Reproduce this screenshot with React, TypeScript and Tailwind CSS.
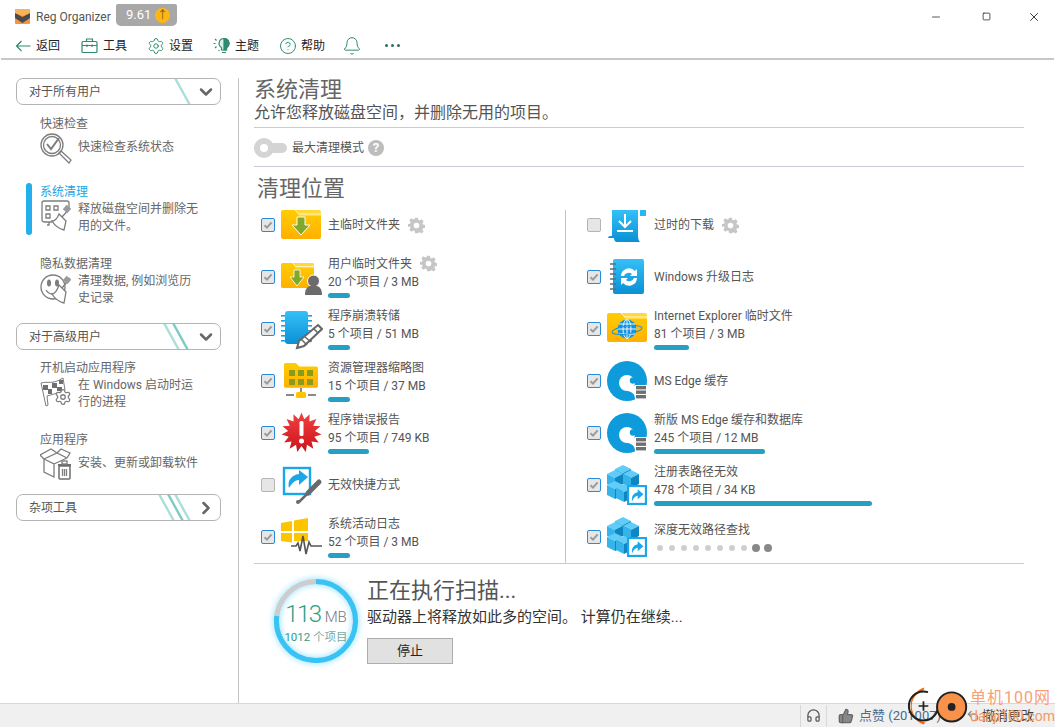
import React from 'react';
import { Bell, ChevronDown, ChevronRight, CircleHelp, Headphones, Minus, Settings, Square, ThumbsUp, Undo2, X } from 'lucide-react';

const Check = ({ on = true }: { on?: boolean }) => (
  <div className={`w-[14px] h-[14px] shrink-0 rounded-[2px] border bg-[#e6e6e6] flex items-center justify-center ${on ? 'border-[#2b8ad8]' : 'border-[#b5b5b5]'}`}>
    {on && (
      <svg width="10" height="10" viewBox="0 0 10 10">
        <path d="M1.5 5.2 4 7.6 8.6 2.4" fill="none" stroke="#9a9a9a" strokeWidth="2" />
      </svg>
    )}
  </div>
);

const Gear = () => (
  <svg width="17" height="17" viewBox="0 0 24 24" className="shrink-0">
    <path
      fill="#c6c6c6"
      fillRule="evenodd"
      d="M10 1h4l.6 3.2 2 .8 2.7-1.800 2.800 2.800-1.800 2.700.8 2 3.200.6v4l-3.200.6-.8 2 1.800 2.700-2.800 2.800-2.700-1.800-2 .8L14 23h-4l-.6-3.200-2-.8-2.700 1.800-2.800-2.800 1.800-2.700-.8-2L-.3 14v-4l3.200-.6.8-2L1.900 4.700l2.800-2.800 2.700 1.800 2-.8zM12 8a4 4 0 100 8 4 4 0 000-8z"
    />
  </svg>
);

const Folder = ({ y = 8, w = 40, h = 29 }: { y?: number; w?: number; h?: number }) => (
  <g transform={`translate(0 ${y}) scale(${w / 40} ${h / 29})`}>
    <path d="M2 0h12l4 4h20a2 2 0 012 2v21a2 2 0 01-2 2H2a2 2 0 01-2-2V2a2 2 0 012-2z" fill="url(#fold)" />
    <path d="M14 0h24a2 2 0 012 2v4H18z" fill="#ffd83a" />
    <path d="M14 0l4 4h22" fill="none" stroke="#fff" strokeWidth="0.8" />
  </g>
);

const Shortcut = ({ x, y, s }: { x: number; y: number; s: number }) => (
  <g transform={`translate(${x} ${y}) scale(${s / 28})`}>
    <rect x="1.500" y="1.500" width="25" height="25" fill="#fff" stroke="#1ba6e8" strokeWidth="3" />
    <path d="M7 23c-1-7 2-12 8-13V6l8 7-8 7v-5c-3 0-6 3-8 8z" fill="#1ba6e8" />
  </g>
);

const Cubes = () => (
  <svg width="42" height="44" viewBox="0 0 42 44">
    {[
      [8, 3],
      [16, 8],
      [0, 8],
      [0, 19],
      [9, 22],
    ].map(([x, y], i) => (
      <g key={i} transform={`translate(${x} ${y})`}>
        <path d="M0 4l8-4 8 4-8 4z" fill="#5fcdf7" />
        <path d="M0 4l8 4v10l-8-4z" fill="#34b4ea" />
        <path d="M16 4l-8 4v10l8-4z" fill="#0e86c2" />
      </g>
    ))}
    <Shortcut x={20} y={23} s={20} />
  </svg>
);

const Edge = () => (
  <svg width="42" height="44" viewBox="0 0 42 44">
    <circle cx="20" cy="23" r="20" fill="#0d9bdc" />
    <circle cx="20" cy="25" r="8" fill="#fff" />
    <circle cx="26" cy="22.500" r="3.200" fill="#0d9bdc" />
    <path d="M21 28h8v13h-1c0-5-3-7-7-8z" fill="#fff" />
    <rect x="28" y="27" width="12" height="15" fill="#fff" />
    <g fill="#6f6f6f">
      <rect x="29" y="28" width="10" height="3.400" />
      <rect x="29" y="32.500" width="10" height="3.400" />
      <rect x="29" y="37" width="10" height="3.400" />
    </g>
  </svg>
);

const burst = Array.from({ length: 30 }, (_, i) => {
  const r = i % 2 ? 13.5 : 20;
  const a = (i * Math.PI) / 15;
  return `${(20.5 + r * Math.sin(a)).toFixed(1)},${(22.5 - r * Math.cos(a)).toFixed(1)}`;
}).join(' ');

const icons: Record<string, React.ReactNode> = {
  temp: (
    <svg width="42" height="44" viewBox="0 0 42 44">
      <Folder />
      <path d="M16 15h8v8h5L20 33l-9-10h5z" fill="#7ea92a" stroke="#fff" strokeWidth="1" />
    </svg>
  ),
  user: (
    <svg width="42" height="44" viewBox="0 0 42 44">
      <Folder y={9} w={33} h={25} />
      <path d="M13 16h6v7h4l-7 9-7-9h4z" fill="#7ea92a" stroke="#fff" strokeWidth="0.8" />
      <circle cx="32.500" cy="27" r="6" fill="#6b6b6b" stroke="#fff" strokeWidth="1" />
      <path d="M24 41c0-6 2-8 5-9h7c3 1 5 3 5 9z" fill="#6b6b6b" />
    </svg>
  ),
  crash: (
    <svg width="42" height="44" viewBox="0 0 42 44">
      <g fill="#18a3e6">
        {[9, 14, 19, 24, 29, 34].map((y) => (
          <rect key={y} x="0" y={y} width="31" height="1.600" />
        ))}
      </g>
      <rect x="4" y="5" width="23" height="33" rx="3" fill="url(#chip)" />
      <path d="M37 19l4 4-18 17-7 2 2-7z" fill="#fff" stroke="#666" strokeWidth="2" />
      <path d="M20 33l6 6M24 31l6 5M32 22l5 5" stroke="#666" strokeWidth="1.500" />
    </svg>
  ),
  thumb: (
    <svg width="42" height="44" viewBox="0 0 42 44">
      <g transform="translate(3 5) scale(0.85 0.85)">
        <path d="M2 0h12l4 4h20a2 2 0 012 2v21a2 2 0 01-2 2H2a2 2 0 01-2-2V2a2 2 0 012-2z" fill="url(#fold)" />
      </g>
      <g fill="#8a9a1c">
        {[8, 17, 26].map((x) => (
          <g key={x}>
            <rect x={x} y="12" width="6" height="6" />
            <rect x={x} y="21" width="6" height="6" />
          </g>
        ))}
      </g>
      <rect x="19" y="30" width="2" height="5" fill="#8a8a8a" />
      <rect x="5" y="36" width="8" height="2" fill="#8a8a8a" />
      <rect x="27" y="36" width="8" height="2" fill="#8a8a8a" />
      <rect x="15" y="34" width="10" height="6" rx="1.500" fill="#ffc400" />
    </svg>
  ),
  report: (
    <svg width="42" height="44" viewBox="0 0 42 44">
      <polygon points={burst} fill="url(#red)" />
      <rect x="18.500" y="11" width="4" height="15" rx="1.500" fill="#fff" />
      <circle cx="20.500" cy="31" r="2.500" fill="#fff" />
    </svg>
  ),
  shortcut: (
    <svg width="42" height="44" viewBox="0 0 42 44">
      <rect x="3" y="6" width="26" height="26" fill="#fff" stroke="#1ba6e8" strokeWidth="2.400" />
      <path d="M8 26c-2-8 3-13 10-14V8l9 7-9 8v-5c-4 0-7 3-10 8z" fill="#1ba6e8" />
      <path d="M38 20l-11 11" stroke="#6a6a6a" strokeWidth="5" strokeLinecap="round" />
      <path d="M27 31l-9 9" stroke="#6a6a6a" strokeWidth="2.500" />
      <circle cx="17" cy="40" r="2" fill="#6a6a6a" />
    </svg>
  ),
  syslog: (
    <svg width="42" height="44" viewBox="0 0 42 44">
      <g fill="#ffc400">
        <path d="M0 9l11-2v10H0z" />
        <path d="M13 6.600l14-2.600v13H13z" />
        <path d="M0 19h11v9.500l-11-1.500z" />
        <path d="M13 19h14v8H13z" />
      </g>
      <path d="M10 32h5l2-3 2 8 3-15 3 18 3-12 2 4h11" fill="none" stroke="#555" strokeWidth="1.600" />
    </svg>
  ),
  download: (
    <svg width="42" height="44" viewBox="0 0 42 44">
      <path d="M5 8h26v26c0 3 1 5 2 6H10c-2 0-3-2-3-4H1c0-2 2-2 4-2z" fill="url(#chip)" />
      <rect x="33" y="8" width="6" height="6" fill="#27b8f2" />
      <path d="M18 12v12M12 19l6 6 6-6M10 29h16" stroke="#fff" strokeWidth="2" fill="none" />
    </svg>
  ),
  update: (
    <svg width="42" height="44" viewBox="0 0 42 44">
      <rect x="6" y="5" width="31" height="35" rx="2" fill="url(#chip)" />
      <g stroke="#5b6d78" strokeWidth="1.500">
        {[10, 15, 20, 25, 30, 35].map((y) => (
          <path key={y} d={`M3 ${y}h6`} />
        ))}
      </g>
      <path d="M14 22a8 8 0 0114-5l2-2v7h-7l2-2a5 5 0 00-8 2zM30 24a8 8 0 01-14 5l-2 2v-7h7l-2 2a5 5 0 008-2z" fill="#fff" />
    </svg>
  ),
  ie: (
    <svg width="42" height="44" viewBox="0 0 42 44">
      <Folder y={7} />
      <circle cx="20" cy="23" r="9.500" fill="#1694de" />
      <g stroke="#fff" strokeWidth="0.900" fill="none">
        <ellipse cx="20" cy="23" rx="4" ry="9.500" />
        <path d="M20 13.500v19M10.500 23h19M12 18h16M12 28h16" />
      </g>
      <ellipse cx="20" cy="24" rx="15" ry="4" fill="none" stroke="#1694de" strokeWidth="1" transform="rotate(-8 20 24)" />
    </svg>
  ),
  edge: <Edge />,
  cubes: <Cubes />,
};

type Row = { id: string; name: string; stat?: string; bar?: number; gear?: boolean; off?: boolean; dots?: boolean };

const leftRows: Row[] = [
  { id: 'temp', name: '主临时文件夹', gear: true },
  { id: 'user', name: '用户临时文件夹', stat: '20 个项目 / 3 MB', bar: 22, gear: true },
  { id: 'crash', name: '程序崩溃转储', stat: '5 个项目 / 51 MB', bar: 22 },
  { id: 'thumb', name: '资源管理器缩略图', stat: '15 个项目 / 37 MB', bar: 22 },
  { id: 'report', name: '程序错误报告', stat: '95 个项目 / 749 KB', bar: 41 },
  { id: 'shortcut', name: '无效快捷方式', off: true },
  { id: 'syslog', name: '系统活动日志', stat: '52 个项目 / 3 MB', bar: 22 },
];

const rightRows: Row[] = [
  { id: 'download', name: '过时的下载', gear: true, off: true },
  { id: 'update', name: 'Windows 升级日志' },
  { id: 'ie', name: 'Internet Explorer 临时文件', stat: '81 个项目 / 3 MB', bar: 35 },
  { id: 'edge', name: 'MS Edge 缓存' },
  { id: 'edge', name: '新版 MS Edge 缓存和数据库', stat: '245 个项目 / 12 MB', bar: 111 },
  { id: 'cubes', name: '注册表路径无效', stat: '478 个项目 / 34 KB', bar: 218 },
  { id: 'cubes', name: '深度无效路径查找', dots: true },
];

const CleanRow = ({ row }: { row: Row }) => (
  <div className="h-[52px] flex items-center">
    <Check on={!row.off} />
    <div className="w-[42px] h-[44px] ml-[6px] mb-[2px] shrink-0">{icons[row.id]}</div>
    <div className={`ml-[5px] text-[12px] text-[#555] ${row.dots ? 'mt-[4px]' : row.stat ? 'mb-[2px]' : ''}`}>
      <div className="h-[18px] leading-[18px] flex items-center whitespace-nowrap">
        {row.name}
        {row.gear && <span className="ml-[8px]"><Gear /></span>}
      </div>
      {row.stat && <div className="h-[18px] leading-[18px] whitespace-nowrap">{row.stat}</div>}
      {row.bar && <div className="mt-[2px] h-[5px] rounded-full bg-[#259fc3]" style={{ width: row.bar }} />}
      {row.dots && (
        <div className="h-[19px] flex items-center gap-[6px] pl-[3px]">
          {[0, 1, 2, 3, 4, 5, 6, 7].map((d) => (
            <div key={d} className="w-[6px] h-[6px] rounded-full bg-[#cfcfcf]" />
          ))}
          <div className="w-[8px] h-[8px] -ml-px rounded-full bg-[#888]" />
          <div className="w-[8px] h-[8px] -ml-[2px] rounded-full bg-[#888]" />
        </div>
      )}
    </div>
  </div>
);

const Group = ({ label, stripes, open = true }: { label: string; stripes: string[]; open?: boolean }) => (
  <div className="relative h-[27px] w-[205px] rounded-[7px] border border-[#b4b4b4] flex items-center pl-[12px] text-[12px] text-[#555] overflow-hidden">
    {label}
    <svg className="absolute inset-0" width="205" height="27" viewBox="0 0 205 27">
      {stripes.map((d, i) => (
        <path key={d} d={d} stroke={i % 2 ? '#7ccbc4' : '#acdeda'} strokeWidth="2.400" fill="none" />
      ))}
    </svg>
    <span className="absolute right-[4px] top-[3px] text-[#666]">
      {open ? <ChevronDown size={20} strokeWidth={3} /> : <ChevronRight size={20} strokeWidth={3} />}
    </span>
  </div>
);

const line = { fill: 'none', stroke: '#7d7d7d', strokeWidth: 1.3 };

const sideIcons: Record<string, React.ReactNode> = {
  check: (
    <svg width="32" height="32" viewBox="0 0 32 32">
      <circle cx="12" cy="13" r="11" {...line} />
      <circle cx="12" cy="13" r="8.500" {...line} />
      <path d="M7 12l4 5 8-11" {...line} strokeWidth={2} />
      <path d="M19 21l2-2 10 9-2 3z" {...line} />
    </svg>
  ),
  clean: (
    <svg width="32" height="32" viewBox="0 0 32 32">
      <path d="M12 22H4a2 2 0 01-2-2V3a2 2 0 012-2h23a2 2 0 012 2v4" {...line} />
      <path d="M9 22v3H7M6 6h4v4H6zM14 6h4v4h-4zM6 14h4v4H6z" {...line} />
      <path d="M30 8l-8 9M19 14l7 7-2 9c-4-1-9-4-12-9 3 0 5-2 7-7z" {...line} />
      <rect x="24" y="6" width="6" height="6" transform="rotate(40 27 9)" fill="#9a9a9a" />
    </svg>
  ),
  privacy: (
    <svg width="32" height="32" viewBox="0 0 32 32">
      <circle cx="13" cy="15" r="12" {...line} />
      <ellipse cx="9" cy="11" rx="2" ry="3.500" fill="#7d7d7d" />
      <ellipse cx="17" cy="11" rx="2" ry="3.500" fill="#7d7d7d" />
      <path d="M6 18c2 3 4 4 6 4" {...line} />
      <path d="M30 6l-8 10M19 13l7 7-2 11c-4-1-9-4-12-9 3 0 5-3 7-9z" fill="#fff" stroke="#7d7d7d" strokeWidth="1.300" />
      <rect x="24" y="5" width="6" height="6" transform="rotate(40 27 8)" fill="#9a9a9a" />
    </svg>
  ),
  startup: (
    <svg width="32" height="32" viewBox="0 0 32 32">
      <path d="M1 7c7-2 11 2 22-5l2 12c-6 3-8 3-11 4l-7 2 1 9-2 1z" fill="#fff" stroke="#7d7d7d" strokeWidth="1" />
      <path d="M3 9h5v5H3zM12 7h5v5h-5zM8 13h4v5H8zM17 11h5v4h-5zM19 4h4v4h-4z" fill="#6f6f6f" />
      <g transform="translate(14 12) scale(0.75)">
        <Settings x={0} y={0} width={24} height={24} color="#7d7d7d" strokeWidth={1.700} fill="#fff" />
      </g>
    </svg>
  ),
  apps: (
    <svg width="32" height="32" viewBox="0 0 32 32">
      <path d="M4 11l10 5v13L4 24zM14 16l13-6M4 11l13-6 10 5M4 11L0 7l11-6 6 4M27 10l3-5-9-4-4 4" {...line} />
      <rect x="18" y="16" width="13" height="2" fill="#6f6f6f" />
      <rect x="22" y="13" width="5" height="3" {...line} />
      <path d="M19 18h11v12a1 1 0 01-1 1h-9a1 1 0 01-1-1z" fill="#fff" stroke="#6f6f6f" strokeWidth="1.500" />
      <path d="M22.500 21v7M24.500 21v7M26.500 21v7" {...line} />
    </svg>
  ),
};

const SideItem = ({ title, icon, desc, h, active = false, single = false }: { title: string; icon: string; desc: React.ReactNode; h: string; active?: boolean; single?: boolean }) => (
  <div className={`flex ${h}`}>
    <div className={`w-[6px] h-[52px] ml-[26px] rounded-full ${active ? 'bg-[#22afec]' : ''}`} />
    <div className="ml-[8px] w-[170px] pt-px">
      <div className={`h-[17px] leading-[17px] text-[12px] ${active ? 'text-[#22a5e4]' : 'text-[#666]'}`}>{title}</div>
      <div className="flex items-start">
        <div className="w-[32px] h-[32px] -mt-px shrink-0">{sideIcons[icon]}</div>
        <div className={`ml-[6px] text-[12px] leading-[17px] text-[#666] whitespace-nowrap ${single ? 'mt-[6px]' : ''}`}>{desc}</div>
      </div>
    </div>
  </div>
);

const green = '#2e8b6e';

const App: React.FC = () => {
  return (
    <div className="relative w-[1055px] h-[727px] overflow-hidden bg-white flex flex-col font-['Roboto','Noto_Sans_CJK_SC',sans-serif]">
      <svg className="absolute w-0 h-0">
        <defs>
          <linearGradient id="fold" x1="0" y1="0" x2="0" y2="1">
            <stop offset="0" stopColor="#ffcd00" />
            <stop offset="1" stopColor="#ffb000" />
          </linearGradient>
          <linearGradient id="chip" x1="0" y1="0" x2="0" y2="1">
            <stop offset="0" stopColor="#35c0f8" />
            <stop offset="1" stopColor="#0a90d4" />
          </linearGradient>
          <linearGradient id="red" x1="0" y1="0" x2="0" y2="1">
            <stop offset="0" stopColor="#f24040" />
            <stop offset="1" stopColor="#c9141c" />
          </linearGradient>
        </defs>
      </svg>

      {/* title bar */}
      <div className="h-[33px] flex items-center shrink-0">
        <svg className="ml-[15px]" width="15" height="15" viewBox="0 0 15 15">
          <rect width="15" height="15" rx="1" fill="#f0963c" />
          <path d="M0 4l7.500 4L15 4v5l-7.500 5L0 9z" fill="#4a4a4a" />
          <path d="M0 0h15v4L7.500 7 0 4z" fill="#f7b25a" />
        </svg>
        <span className="ml-[6px] w-[75px] text-[12px] text-[#555] whitespace-nowrap">Reg Organizer</span>
        <div className="ml-[5px] mt-[-3px] w-[61px] h-[22px] rounded-b-[5px] rounded-t-[2px] bg-[#a8a8a8] flex items-center pl-[10px]">
          <span className="w-[24px] text-[13px] text-white">9.61</span>
          <span className="ml-[5px] w-[15px] h-[15px] rounded-full bg-[#fdb714] flex items-center justify-center text-[#7a5a10] text-[11px] leading-none">↑</span>
        </div>
        <div className="ml-auto flex items-center text-[#222]">
          <div className="w-[50px] flex justify-center"><Minus size={12} strokeWidth={1.500} /></div>
          <div className="w-[50px] flex justify-center"><Square size={9} strokeWidth={2} /></div>
          <div className="w-[44px] pl-[2px] flex justify-center"><X size={14} strokeWidth={1.500} /></div>
        </div>
      </div>

      {/* toolbar */}
      <div className="h-[27px] shrink-0 flex items-center pl-[14px] border-b-2 border-[#c8c8c8] text-[12px] text-[#222] mx-px">
        <svg width="16" height="16" viewBox="0 0 16 16" fill="none" stroke={green} strokeWidth="1.200">
          <path d="M15.500 8H1M6.500 3 1.500 8l5 5" />
        </svg>
        <span className="ml-[5px]">返回</span>
        <svg className="ml-[21px]" width="17" height="17" viewBox="0 0 17 17" fill="none" stroke={green} strokeWidth="1.200">
          <rect x="1" y="4.500" width="15" height="11" rx="1" />
          <path d="M5.500 4.500V2h6v2.500M1 8.500h15M6 7.500v2.500M11 7.500v2.500" />
        </svg>
        <span className="ml-[5px]">工具</span>
        <Settings size={18} strokeWidth={1.300} color={green} className="ml-[20px]" />
        <span className="ml-[4px]">设置</span>
        <svg className="ml-[20px]" width="17" height="17" viewBox="0 0 17 17" fill="none" stroke={green} strokeWidth="1.200">
          <path d="M11 1.500a5 5 0 00-2.500 9.300V13h5v-2.200A5 5 0 0011 1.500z" fill={green} fillOpacity="0.15" />
          <path d="M11 1.500a5 5 0 012.500 9.300V13H11z" fill={green} />
          <path d="M9 15.500h4M0.500 6.500h2M2 2l1.500 1.500M2 11l1.500-1.500M5.500 14l.8-1" />
        </svg>
        <span className="ml-[5px]">主题</span>
        <CircleHelp size={18} strokeWidth={1.300} color={green} className="ml-[20px]" />
        <span className="ml-[4px]">帮助</span>
        <Bell size={20} strokeWidth={1.200} color={green} className="ml-[17px]" />
        <div className="ml-[23px] flex gap-[3px]">
          <div className="w-[3px] h-[3px] rounded-full bg-[#2e6e58]" />
          <div className="w-[3px] h-[3px] rounded-full bg-[#2e6e58]" />
          <div className="w-[3px] h-[3px] rounded-full bg-[#2e6e58]" />
        </div>
      </div>

      <div className="flex-1 flex min-h-0">
        {/* sidebar */}
        <div className="w-[239px] shrink-0 mt-[18px] border-r border-[#c4c4c4] flex flex-col">
          <div className="pl-[16px]">
            <Group label="对于所有用户" stripes={['M158 -1l16 29']} />
          </div>
          <div className="mt-[10px]">
            <SideItem h="h-[68px]" title="快速检查" icon="check" single desc="快速检查系统状态" />
            <SideItem h="h-[72px]" title="系统清理" icon="clean" active desc={<>释放磁盘空间并删除无<br />用的文件。</>} />
            <SideItem h="h-[68px]" title="隐私数据清理" icon="privacy" desc={<>清理数据, 例如浏览历<br />史记录</>} />
          </div>
          <div className="pl-[16px]">
            <Group label="对于高级用户" stripes={['M147 -1l16 29', 'M156 -1l16 29']} />
          </div>
          <div className="mt-[9px]">
            <SideItem h="h-[72px]" title="开机启动应用程序" icon="startup" desc={<>在 Windows 启动时运<br />行的进程</>} />
            <SideItem h="h-[63px]" title="应用程序" icon="apps" single desc="安装、更新或卸载软件" />
          </div>
          <div className="pl-[16px]">
            <Group label="杂项工具" open={false} stripes={['M142 -1l16 29', 'M151 -1l16 29', 'M158 -1l16 29']} />
          </div>
        </div>

        {/* main */}
        <div className="flex-1 ml-[15px] mr-[31px] flex flex-col">
          <div className="h-[68px] border-b border-[#c8cad6] pt-[16px]">
            <div className="text-[22px] leading-[28px] text-[#666]">系统清理</div>
            <div className="text-[16px] leading-[18px] text-[#555]">允许您释放磁盘空间，并删除无用的项目。</div>
          </div>
          <div className="h-[39px] pt-[2px] border-b border-[#c8cad6] flex items-center text-[12px] text-[#555]">
            <div className="relative w-[33px] h-[10px] rounded-full bg-[#d4d4d4]">
              <div className="absolute left-0 top-[-5px] w-[20px] h-[20px] rounded-full border-[6px] border-[#d4d4d4] bg-white" />
            </div>
            <span className="ml-[5px]">最大清理模式</span>
            <span className="ml-[4px] w-[16px] h-[16px] rounded-full bg-[#bdbdbd] text-white text-[13px] font-bold flex items-center justify-center">?</span>
          </div>
          <div className="h-[32px] pl-[3px] pt-[8px] text-[22px] leading-[28px] text-[#666]">清理位置</div>

          <div className="flex h-[365px] border-b border-[#c8cad6]">
            <div className="w-[311px] pl-[7px]">
              {leftRows.map((row) => (
                <CleanRow key={row.name} row={row} />
              ))}
            </div>
            <div className="w-px mt-[11px] bg-[#c4c4c4]" />
            <div className="flex-1 pl-[21px]">
              {rightRows.map((row) => (
                <CleanRow key={row.name} row={row} />
              ))}
            </div>
          </div>

          {/* scan */}
          <div className="flex pl-[20px] pt-[15px]">
            <div className="relative w-[84px] h-[84px]">
              <svg width="84" height="84" viewBox="0 0 84 84" className="drop-shadow-[0_0_3px_#7fdcff]">
                <circle cx="42" cy="42" r="39.500" fill="none" stroke="#cdcdcd" strokeWidth="5" />
                <path d="M42 2.500A39.500 39.500 0 112.800 37" fill="none" stroke="#38c3f5" strokeWidth="5" />
              </svg>
              <div className="absolute inset-0 flex flex-col items-center justify-center pt-[2px]">
                <div className="flex items-baseline leading-[28px]">
                  <span className="text-[24px] font-light text-[#2e9d86] tracking-[-1.500px]">113</span>
                  <span className="ml-[4px] text-[15px] font-light text-[#778]">MB</span>
                </div>
                <div className="-mt-[1px] text-[11.500px] leading-[14px] text-[#2e9d86] whitespace-nowrap">1012 <span className="text-[#7aa8a0]">个项目</span></div>
              </div>
            </div>
            <div className="ml-[9px] -mt-[2px]">
              <div className="text-[22px] leading-[28px] text-[#555]">正在执行扫描...</div>
              <div className="mt-[2px] text-[15px] leading-[20px] text-[#333] whitespace-nowrap">驱动器上将释放如此多的空间。 计算仍在继续...</div>
              <button className="mt-[11px] block w-[86px] h-[26px] bg-[#e1e1e1] border border-[#adadad] text-[13px] text-[#222]">停止</button>
            </div>
          </div>
        </div>
      </div>

      {/* status bar */}
      <div className="h-[24px] shrink-0 bg-[#f0f0f0] border-t border-[#d8d8d8] flex items-center text-[13px] text-[#4a6a90]">
        <div className="ml-[800px] h-[22px] w-[27px] border-x border-[#d8d8d8] flex items-center justify-center">
          <Headphones size={15} color="#555" />
        </div>
        <ThumbsUp size={16} color="#666" fill="#888" className="ml-[11px]" />
        <span className="ml-[5px] w-[90px] whitespace-nowrap">点赞 (201007)</span>
        <Undo2 size={14} color="#888" className="ml-[17px]" />
        <span className="ml-[2px] whitespace-nowrap text-[#444]">撤消更改</span>
      </div>

      {/* watermark */}
      <div className="absolute left-[905px] top-[686px] w-[150px] h-[41px] flex items-start pointer-events-none">
        <svg width="66" height="40" viewBox="0 0 66 40">
          <path d="M20 1a20 20 0 00-1 38l2-2a17 17 0 01-2-33z" fill="#f26a10" />
          <circle cx="19" cy="20" r="15" fill="none" stroke="#1f1f1f" strokeWidth="2" strokeDasharray="75 20" />
          <path d="M14 20h10M19 15v10" stroke="#222" strokeWidth="1.800" />
          <circle cx="48" cy="21" r="15" fill="#f8924a" stroke="#1f1f1f" strokeWidth="2" />
          <circle cx="48" cy="21" r="4" fill="#222" />
        </svg>
        <div className="ml-[1px] text-[#f8a077] whitespace-nowrap">
          <div className="text-[16px] leading-[20px] tracking-[1px] mt-[2px]">单机100网</div>
          <div className="text-[14px] leading-[16px] text-[#f09a5e]">danji100.com</div>
        </div>
      </div>
    </div>
  );
};

export default App;
